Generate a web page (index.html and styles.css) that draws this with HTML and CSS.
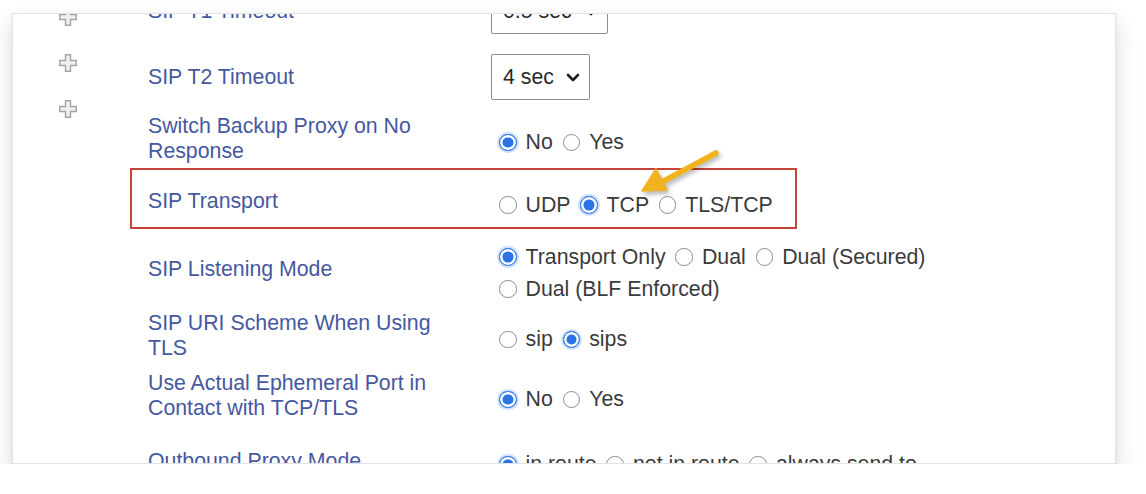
FILE: index.html
```html
<!DOCTYPE html>
<html>
<head>
<meta charset="utf-8">
<link rel="stylesheet" href="styles.css">
</head>
<body>
<div class="card">
  <div class="icons">
    <svg class="plus" viewBox="0 0 18 18"><path d="M6.5 0.75h5v5.75h5.75v5h-5.75v5.75h-5v-5.75h-5.75v-5h5.75z"/></svg>
    <svg class="plus" viewBox="0 0 18 18"><path d="M6.5 0.75h5v5.75h5.75v5h-5.75v5.75h-5v-5.75h-5.75v-5h5.75z"/></svg>
    <svg class="plus" viewBox="0 0 18 18"><path d="M6.5 0.75h5v5.75h5.75v5h-5.75v5.75h-5v-5.75h-5.75v-5h5.75z"/></svg>
  </div>
  <div class="rows">
    <div class="row h66">
      <div class="lbl">SIP T1 Timeout</div>
      <div class="val"><div class="select"><span>0.5 sec</span><svg class="chev" viewBox="0 0 14 9"><path d="M2 2l5 5 5-5"/></svg></div></div>
    </div>
    <div class="row h66">
      <div class="lbl">SIP T2 Timeout</div>
      <div class="val"><div class="select"><span>4 sec</span><svg class="chev" viewBox="0 0 14 9"><path d="M2 2l5 5 5-5"/></svg></div></div>
    </div>
    <div class="row h58">
      <div class="lbl">Switch Backup Proxy on No Response</div>
      <div class="val radios">
        <span class="opt"><span class="radio on"></span>No</span>
        <span class="opt"><span class="radio"></span>Yes</span>
      </div>
    </div>
    <div class="row h61 hl">
      <div class="lbl">SIP Transport</div>
      <div class="val radios">
        <span class="opt"><span class="radio"></span>UDP</span>
        <span class="opt"><span class="radio on"></span>TCP</span>
        <span class="opt"><span class="radio"></span>TLS/TCP</span>
      </div>
    </div>
    <div class="row h81">
      <div class="lbl">SIP Listening Mode</div>
      <div class="val radios">
        <span class="opt"><span class="radio on"></span>Transport Only</span>
        <span class="opt"><span class="radio"></span>Dual</span>
        <span class="opt"><span class="radio"></span>Dual (Secured)</span>
        <span class="opt"><span class="radio"></span>Dual (BLF Enforced)</span>
      </div>
    </div>
    <div class="row h52">
      <div class="lbl">SIP URI Scheme When Using TLS</div>
      <div class="val radios">
        <span class="opt"><span class="radio"></span>sip</span>
        <span class="opt"><span class="radio on"></span>sips</span>
      </div>
    </div>
    <div class="row h68">
      <div class="lbl">Use Actual Ephemeral Port in Contact with TCP/TLS</div>
      <div class="val radios">
        <span class="opt"><span class="radio on"></span>No</span>
        <span class="opt"><span class="radio"></span>Yes</span>
      </div>
    </div>
    <div class="row h62">
      <div class="lbl">Outbound Proxy Mode</div>
      <div class="val radios">
        <span class="opt"><span class="radio on"></span>in route</span>
        <span class="opt"><span class="radio"></span>not in route</span>
        <span class="opt"><span class="radio"></span>always send to</span>
      </div>
    </div>
  </div>
  <svg class="arrow" viewBox="0 0 100 66" width="100" height="66">
    <path class="shaft" d="M86 13L32 42"/>
    <path class="head" d="M12 51L37 50L26 29Z"/>
  </svg>
</div>
</body>
</html>
```

FILE: styles.css
```css
html, body {
  margin: 0;
  padding: 0;
  background: #fff;
}
body {
  font-family: "Liberation Sans", Arial, sans-serif;
  font-size: 21.3px;
}
.card {
  position: relative;
  box-sizing: border-box;
  margin: 13px 0 0 12px;
  width: 1104px;
  height: 451px;
  border: 1px solid #e3e3e3;
  background: #fff;
  overflow: hidden;
  display: flex;
  align-items: flex-start;
  box-shadow: 0 12px 22px rgba(0, 0, 0, 0.14), 0 2px 6px rgba(0, 0, 0, 0.05);
}
.icons {
  margin: -6px 0 0 46px;
  width: 18px;
  display: flex;
  flex-direction: column;
  gap: 28px;
  flex: none;
}
.plus {
  width: 18px;
  height: 18px;
  display: block;
}
.plus path {
  fill: #efefef;
  stroke: #a3a3a3;
  stroke-width: 1.4;
}
.rows {
  margin: -36px 0 0 53px;
  display: flex;
  flex-direction: column;
  flex: none;
}
.row {
  box-sizing: border-box;
  width: 667px;
  border: 2px solid transparent;
  padding-left: 16px;
  display: flex;
  align-items: center;
}
.row.hl {
  border-color: #c6433a;
  padding-top: 6px;
}
.h66 { height: 66px; }
.h58 { height: 58px; }
.h61 { height: 61px; }
.h81 { height: 81px; }
.h52 { height: 52px; }
.h68 { height: 68px; }
.h62 { height: 62px; }
.lbl {
  flex: none;
  box-sizing: border-box;
  width: 343px;
  padding-right: 43px;
  color: #4658a0;
  line-height: 25px;
}
.val {
  flex: none;
  width: 466px;
  color: #3b3b3b;
}
.radios {
  box-sizing: border-box;
  padding: 6px 0 0 4px;
  line-height: 32px;
}
.opt {
  white-space: nowrap;
}
.radio {
  display: inline-block;
  box-sizing: border-box;
  width: 17.5px;
  height: 17.5px;
  border-radius: 50%;
  border: 1px solid #8c8c8c;
  background: #fff;
  vertical-align: -2px;
  margin: 0 9px 0 4px;
}
.radio.on {
  border: 1.5px solid #2b74e6;
  background: #2b74e6;
  box-shadow: inset 0 0 0 2.5px #fff, 0 0 0 2px rgba(90, 150, 250, 0.28);
}
.select {
  box-sizing: border-box;
  display: inline-flex;
  align-items: center;
  height: 46px;
  padding: 0 9px 0 11px;
  gap: 12px;
  border: 1.5px solid #8d8d8d;
  border-radius: 2px;
  color: #2a2a2a;
  background: #fff;
}
.chev {
  width: 14px;
  height: 9px;
}
.chev path {
  fill: none;
  stroke: #1e1e1e;
  stroke-width: 2.6;
  stroke-linecap: round;
  stroke-linejoin: round;
}
.arrow {
  position: absolute;
  left: 617px;
  top: 126px;
  filter: drop-shadow(2px 3px 2px rgba(0, 0, 0, 0.28));
}
.shaft {
  stroke: #f2b21e;
  stroke-width: 5.5;
  stroke-linecap: round;
  fill: none;
}
.head {
  fill: #f2b21e;
  stroke: #f2b21e;
  stroke-width: 1.5;
  stroke-linejoin: round;
}
```
